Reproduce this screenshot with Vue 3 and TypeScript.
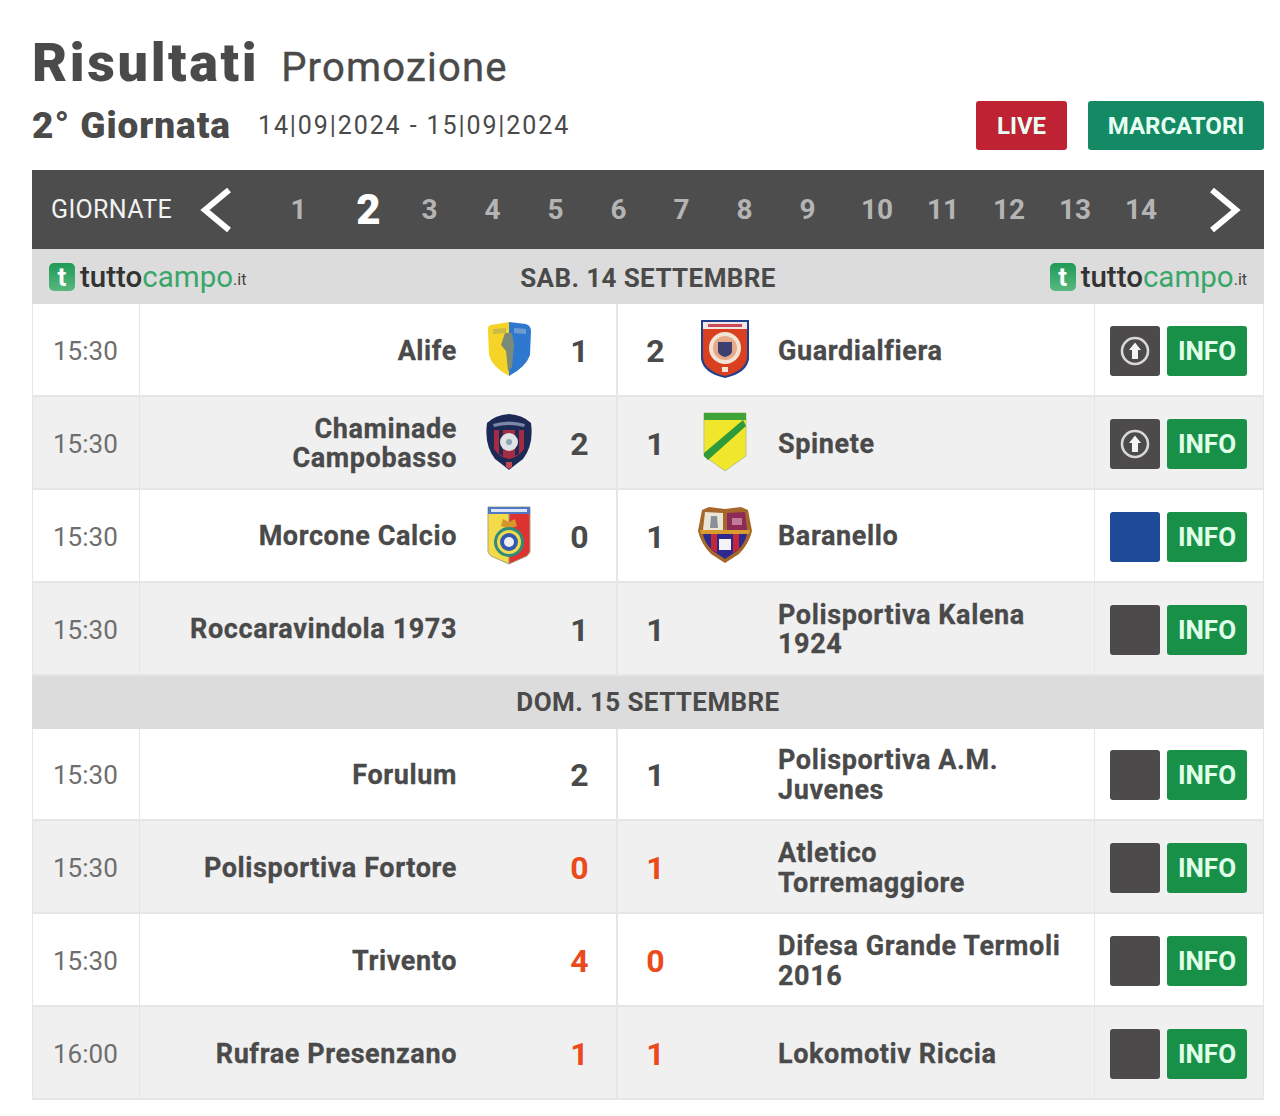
<script setup lang="ts">
interface Shape { d: string; fill: string; stroke?: string; sw?: number }
interface Crest { w: number; h: number; shapes: Shape[] }
interface Match {
  time: string; home: string; hs: number; away: string; as: number
  hc?: string; ac?: string; action: 'up' | 'blue' | 'dark'; live?: boolean
}
interface Day { label: string; logos: boolean; matches: Match[] }

const circle = (cx: number, cy: number, r: number) =>
  `M${cx - r} ${cy}a${r} ${r} 0 1 0 ${r * 2} 0a${r} ${r} 0 1 0 ${-r * 2} 0Z`

const crests: Record<string, Crest> = {
  alife: { w: 46, h: 56, shapes: [
    { d: 'M23 1 L5 4 Q1 5 2 10 L3 34 Q6 46 23 55 Z', fill: '#f5d327' },
    { d: 'M23 1 L40 3 Q45 5 45 10 L44 34 Q40 46 23 55 Z', fill: '#2f78d0' },
    { d: 'M19 12 L26 12 L28 24 L26 46 L22 50 L20 30 L15 24 Z', fill: '#7c8a7a' },
    { d: 'M7 8 L20 7 L20 12 L7 13 Z', fill: '#cbb94a' },
    { d: 'M28 7 L40 8 L40 13 L28 12 Z', fill: '#6f9bcf' }
  ] },
  guard: { w: 50, h: 60, shapes: [
    { d: 'M1 1 L49 1 L49 40 Q47 54 25 59 Q3 54 1 40 Z', fill: '#1f3f8f' },
    { d: 'M3 10 L47 10 L47 39 Q45 52 25 57 Q5 52 3 39 Z', fill: '#d8401f' },
    { d: 'M3 3 L47 3 L47 10 L3 10 Z', fill: '#f1e6e6' },
    { d: 'M8 5 L42 5 L42 8 L8 8 Z', fill: '#c9485a' },
    { d: circle(25, 29, 16), fill: '#f3e4d6' },
    { d: circle(25, 29, 12), fill: '#e6a98a' },
    { d: 'M18 23 L32 23 L32 32 Q32 36 25 38 Q18 36 18 32 Z', fill: '#3d3f70' },
    { d: 'M22 48 L28 48 L28 53 L22 53 Z', fill: '#f3e4d6' }
  ] },
  cham: { w: 48, h: 58, shapes: [
    { d: 'M24 1 Q38 2 46 10 Q49 32 38 46 Q30 52 24 57 Q18 52 10 46 Q-1 32 2 10 Q10 2 24 1 Z', fill: '#1d2a55' },
    { d: 'M9 17 L39 17 L39 36 Q34 44 24 46 Q14 44 9 36 Z', fill: '#a32b44' },
    { d: 'M14 17 L18 17 L18 43 L14 41 Z', fill: '#1d2a55' },
    { d: 'M30 17 L34 17 L34 41 L30 43 Z', fill: '#1d2a55' },
    { d: circle(24, 29, 9), fill: '#dfe3e6' },
    { d: circle(24, 29, 3), fill: '#8fa4b5' },
    { d: 'M8 11 Q24 6 40 11 L39 14 Q24 10 9 14 Z', fill: '#7d86a8' },
    { d: 'M21 49 L27 49 L27 54 L24 56 L21 54 Z', fill: '#c24a55' }
  ] },
  spin: { w: 44, h: 60, shapes: [
    { d: 'M1 1 L43 1 L43 44 L22 59 L1 44 Z', fill: '#f0e62c', stroke: '#b9c38a', sw: 1 },
    { d: 'M1 1 L43 1 L43 8 L1 8 Z', fill: '#3fa33a' },
    { d: 'M40 8 L43 14 L5 48 L1 44 L1 41 Z', fill: '#2e9a3a' }
  ] },
  morc: { w: 44, h: 59, shapes: [
    { d: 'M1 1 L22 1 L22 58 L4 50 L1 46 Z', fill: '#f2da4a', stroke: '#a8a47a', sw: 1 },
    { d: 'M22 1 L43 1 L43 46 L40 50 L22 58 Z', fill: '#dd3232', stroke: '#a8a47a', sw: 1 },
    { d: 'M1 1 L43 1 L43 8 L1 8 Z', fill: '#5178c4' },
    { d: 'M4 3 L40 3 L40 6 L4 6 Z', fill: '#dfe6f5' },
    { d: 'M14 20 L16 13 L22 16 L28 13 L30 20 Q22 24 14 20 Z', fill: '#d8962a' },
    { d: circle(22, 36, 15), fill: '#2d8c7c' },
    { d: circle(22, 36, 12), fill: '#f2da4a' },
    { d: circle(22, 36, 9), fill: '#3358b0' },
    { d: circle(22, 36, 5), fill: '#eef0f5' }
  ] },
  bara: { w: 56, h: 58, shapes: [
    { d: 'M5 4 L12 1 L28 3 L44 1 L51 4 L55 25 Q52 38 42 48 L28 57 L14 48 Q4 38 1 25 Z', fill: '#a6682a' },
    { d: 'M8 6 L26 7 L26 24 L6 24 Z', fill: '#e9e6d6' },
    { d: 'M30 7 L48 6 L50 24 L30 24 Z', fill: '#8d2a58' },
    { d: 'M14 10 L20 10 L21 22 L13 22 Z', fill: '#8a8f9c' },
    { d: 'M35 12 L45 12 L45 19 L35 19 Z', fill: '#c07a9a' },
    { d: 'M6 28 L50 28 Q48 38 40 45 L28 53 L16 45 Q8 38 6 28 Z', fill: '#2c2a8f' },
    { d: 'M14 28 L20 28 L20 47 L14 43 Z', fill: '#c4263a' },
    { d: 'M36 28 L42 28 L42 43 L36 47 Z', fill: '#c4263a' },
    { d: 'M22 33 L34 33 L34 44 L22 44 Z', fill: '#f4f4f8' },
    { d: 'M3 24 L53 24 L52 28 L4 28 Z', fill: '#d89b2e' }
  ] }
}

const days: Day[] = [
  { label: 'SAB. 14 SETTEMBRE', logos: true, matches: [
    { time: '15:30', home: 'Alife', hs: 1, away: 'Guardialfiera', as: 2, hc: 'alife', ac: 'guard', action: 'up' },
    { time: '15:30', home: 'Chaminade\nCampobasso', hs: 2, away: 'Spinete', as: 1, hc: 'cham', ac: 'spin', action: 'up' },
    { time: '15:30', home: 'Morcone Calcio', hs: 0, away: 'Baranello', as: 1, hc: 'morc', ac: 'bara', action: 'blue' },
    { time: '15:30', home: 'Roccaravindola 1973', hs: 1, away: 'Polisportiva Kalena\n1924', as: 1, action: 'dark' }
  ] },
  { label: 'DOM. 15 SETTEMBRE', logos: false, matches: [
    { time: '15:30', home: 'Forulum', hs: 2, away: 'Polisportiva A.M.\nJuvenes', as: 1, action: 'dark' },
    { time: '15:30', home: 'Polisportiva Fortore', hs: 0, away: 'Atletico\nTorremaggiore', as: 1, action: 'dark', live: true },
    { time: '15:30', home: 'Trivento', hs: 4, away: 'Difesa Grande Termoli\n2016', as: 0, action: 'dark', live: true },
    { time: '16:00', home: 'Rufrae Presenzano', hs: 1, away: 'Lokomotiv Riccia', as: 1, action: 'dark', live: true }
  ] }
]

const rounds = Array.from({ length: 14 }, (_, i) => i + 1)
</script>

<template>
  <main class="page">
    <header class="head">
      <h1 class="title">Risultati <small>Promozione</small></h1>
      <div class="sub">
        <h2 class="round">2° Giornata</h2>
        <span class="dates">14|09|2024 - 15|09|2024</span>
        <div class="cta">
          <a class="btn live">LIVE</a>
          <a class="btn scorers">MARCATORI</a>
        </div>
      </div>
    </header>

    <nav class="pager">
      <span class="pager-label">GIORNATE</span>
      <svg class="chev prev" width="32" height="44" viewBox="0 0 32 44">
        <path d="M29 2 L5 22 L29 42" fill="none" stroke="#fff" stroke-width="6" />
      </svg>
      <ol class="rounds">
        <li v-for="n in rounds" :key="n" :class="{ now: n === 2, wide: n >= 10, first10: n === 10 }">{{ n }}</li>
      </ol>
      <svg class="chev next" width="32" height="44" viewBox="0 0 32 44">
        <path d="M3 2 L27 22 L3 42" fill="none" stroke="#fff" stroke-width="6" />
      </svg>
    </nav>

    <section v-for="day in days" :key="day.label" class="day">
      <div class="day-head" :class="{ plain: !day.logos }">
        <div v-if="day.logos" class="logo">
          <span class="logo-mark">t</span><span class="logo-a">tutto</span><span class="logo-b">campo</span><span class="logo-c">.it</span>
        </div>
        <strong class="day-label">{{ day.label }}</strong>
        <div v-if="day.logos" class="logo logo-end">
          <span class="logo-mark">t</span><span class="logo-a">tutto</span><span class="logo-b">campo</span><span class="logo-c">.it</span>
        </div>
      </div>

      <div v-for="(m, i) in day.matches" :key="m.home" class="row" :class="{ alt: i % 2 === 1 }">
        <div class="time">{{ m.time }}</div>
        <div class="side home">
          <span class="name">{{ m.home }}</span>
          <span class="crest">
            <svg v-if="m.hc" :width="crests[m.hc].w" :height="crests[m.hc].h" :viewBox="`0 0 ${crests[m.hc].w} ${crests[m.hc].h}`">
              <path v-for="(s, k) in crests[m.hc].shapes" :key="k" :d="s.d" :fill="s.fill" :stroke="s.stroke" :stroke-width="s.sw" />
            </svg>
          </span>
          <span class="score" :class="{ hot: m.live }">{{ m.hs }}</span>
        </div>
        <div class="side away">
          <span class="score" :class="{ hot: m.live }">{{ m.as }}</span>
          <span class="crest">
            <svg v-if="m.ac" :width="crests[m.ac].w" :height="crests[m.ac].h" :viewBox="`0 0 ${crests[m.ac].w} ${crests[m.ac].h}`">
              <path v-for="(s, k) in crests[m.ac].shapes" :key="k" :d="s.d" :fill="s.fill" :stroke="s.stroke" :stroke-width="s.sw" />
            </svg>
          </span>
          <span class="name">{{ m.away }}</span>
        </div>
        <div class="actions">
          <a class="square" :class="m.action">
            <svg v-if="m.action === 'up'" width="30" height="30" viewBox="0 0 30 30">
              <circle cx="15" cy="15" r="13" fill="none" stroke="#d8d8d8" stroke-width="2.6" />
              <path d="M15 6.5 L21 14 L18 14 L18 23 L12 23 L12 14 L9 14 Z" fill="#f4f4f4" />
            </svg>
          </a>
          <a class="info">INFO</a>
        </div>
      </div>
    </section>
  </main>
</template>

<style scoped>
.page {
  width: 1232px;
  margin-left: 32px;
  color: #4a4a4a;
  font-family: Roboto, "Liberation Sans", sans-serif;
}
.head { padding-top: 33px; }
.title {
  margin: 0;
  height: 68px;
  font-size: 54px;
  line-height: 60px;
  font-weight: 900;
  letter-spacing: 2.6px;
  white-space: pre-wrap;
}
.title small {
  margin-left: 6px;
  font-size: 40px;
  font-weight: 400;
  letter-spacing: 1.2px;
  -webkit-text-stroke: 0.4px #4a4a4a;
}
.sub { display: flex; align-items: center; height: 49px; }
.round { margin: 0; font-size: 37px; font-weight: 900; line-height: 49px; letter-spacing: 0.95px; }
.dates { margin-left: 27px; font-size: 25px; letter-spacing: 1.9px; }
.cta { margin-left: auto; display: flex; gap: 21px; }
.btn {
  display: flex;
  align-items: center;
  justify-content: center;
  height: 49px;
  border-radius: 3px;
  color: #e8fff4;
  font-size: 24px;
  font-weight: 700;
}
.live { width: 91px; background: #bf2233; }
.scorers { width: 176px; background: #138a63; }

.pager {
  display: flex;
  align-items: center;
  height: 79px;
  margin-top: 20px;
  padding-left: 19px;
  background: #4d4d4d;
}
.pager-label { width: 149px; color: #f2f2f2; font-size: 25px; letter-spacing: 0.35px; }
.chev { flex: none; }
.rounds {
  display: flex;
  align-items: center;
  margin: 0 0 0 35px;
  padding: 0;
  list-style: none;
  color: #b4b4b4;
  font-size: 28px;
  font-weight: 700;
}
.rounds li { width: 63px; text-align: center; }
.rounds li.now { margin: 0 -2px 0 7px; color: #fff; font-size: 42px; font-weight: 900; }
.rounds li.wide { width: 66px; }
.rounds li.first10 { margin-left: 5px; }
.next { margin-left: 35px; }

.day-head {
  display: grid;
  grid-template-columns: 1fr auto 1fr;
  align-items: center;
  height: 55px;
  padding: 0 17px;
  background: #dcdcdc;
}
.day-head.plain { display: flex; justify-content: center; height: 53px; }
.day-label { font-size: 26px; font-weight: 700; letter-spacing: 0.4px; }
.day-head:not(.plain) .day-label { margin-top: 3px; }
.logo { display: flex; align-items: center; font-size: 29.5px; }
.logo-end { justify-content: flex-end; }
.logo-mark {
  display: flex;
  align-items: center;
  justify-content: center;
  width: 26px;
  height: 28px;
  margin-right: 5px;
  border-radius: 5px;
  background: linear-gradient(#1f9a55, #57b87e);
  color: #fff;
  font-size: 26px;
  font-weight: 700;
}
.logo-a { color: #333; font-weight: 500; }
.logo-b { color: #3aa76a; }
.logo-c { align-self: flex-end; margin-bottom: 5px; color: #444; font-size: 16px; }

.row {
  display: grid;
  grid-template-columns: 107px 478px 476px 171px;
  height: 92.875px;
  box-sizing: border-box;
  border: 1px solid #e6e6e6;
  border-width: 0 1px 2px;
  background: #fff;
}
.row > * { box-sizing: border-box; padding-top: 3px; }
.row.alt { background: #f0f0f1; }
.time {
  display: flex;
  align-items: center;
  padding-left: 20px;
  border-right: 1px solid #e6e6e6;
  color: #6e6e6e;
  font-size: 26px;
}
.side { display: flex; align-items: center; }
.home { justify-content: flex-end; border-right: 2px solid #e6e6e6; text-align: right; }
.name {
  margin-top: 1px;
  font-size: 27px;
  line-height: 29.5px;
  font-weight: 700;
  letter-spacing: 0.6px;
  white-space: pre-line;
  -webkit-text-stroke: 0.3px #4a4a4a;
}
.crest { display: flex; justify-content: center; align-items: center; flex: none; width: 64px; margin-bottom: 3px; }
.home .crest { margin-left: 20px; margin-right: 2px; }
.away .crest { margin-right: 21px; }
.score { flex: none; width: 75px; text-align: center; font-size: 32px; font-weight: 700; }
.home .score { width: 73px; }
.score.hot { color: #ea4a1c; }
.actions { display: flex; align-items: center; gap: 7px; padding-left: 15px; border-left: 1px solid #e6e6e6; }
.square {
  display: flex;
  align-items: center;
  justify-content: center;
  width: 50px;
  height: 50px;
  border-radius: 3px;
}
.square.up, .square.dark { background: #4d4a4b; }
.square.blue { background: #1d4b97; }
.info {
  display: flex;
  align-items: center;
  justify-content: center;
  width: 80px;
  height: 50px;
  border-radius: 3px;
  background: #189048;
  color: #e0ffe9;
  font-size: 26px;
  font-weight: 700;
}
</style>
